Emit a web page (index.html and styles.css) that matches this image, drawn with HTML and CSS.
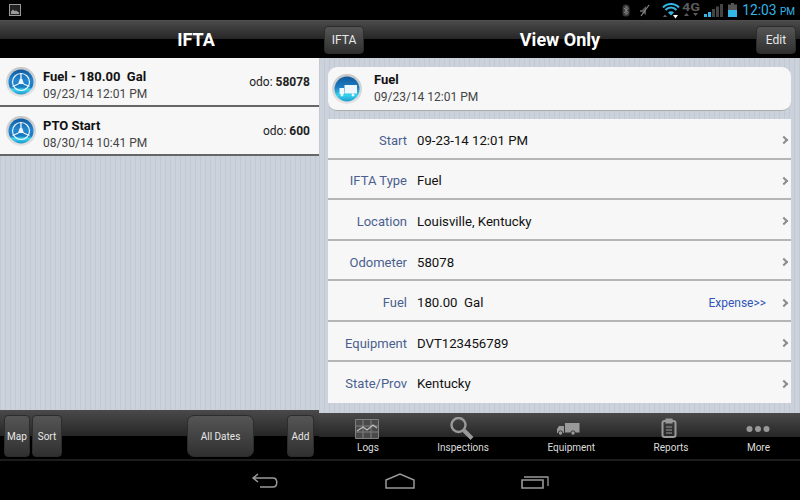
FILE: index.html
```html
<!DOCTYPE html>
<html lang="en">

<head>
    <meta charset="UTF-8">
    <title>IFTA</title>
    <link rel="stylesheet" href="styles.css">
</head>

<body>
    <svg class="defs" width="0" height="0">
        <defs>
            <linearGradient id="rim" x1="0" y1="0" x2="0" y2="1">
                <stop offset="0" stop-color="#c4c6c8" />
                <stop offset="1" stop-color="#e4e4e4" />
            </linearGradient>
            <linearGradient id="ball" x1="0" y1="0" x2="0" y2="1">
                <stop offset="0" stop-color="#0f5a9e" />
                <stop offset="0.45" stop-color="#2388d2" />
                <stop offset="0.7" stop-color="#1878c0" />
                <stop offset="0.8" stop-color="#3fd4ee" />
                <stop offset="1" stop-color="#1f94cc" />
            </linearGradient>
            <linearGradient id="glow" x1="0" y1="0" x2="0" y2="1">
                <stop offset="0" stop-color="#10589a" />
                <stop offset="0.45" stop-color="#1f80c6" />
                <stop offset="0.75" stop-color="#35d3ec" />
                <stop offset="1" stop-color="#2299d0" />
            </linearGradient>
            <symbol id="wheel" viewBox="0 0 32 32">
                <circle cx="16" cy="16" r="15" fill="url(#rim)" />
                <circle cx="16" cy="16" r="12.500" fill="url(#ball)" />
                <circle cx="16" cy="16" r="8.500" fill="none" stroke="#eef7fc" stroke-width="1.200" />
                <path d="M16 8v5M13.500 18l-6 2.500M18.500 18l6 2.500" fill="none" stroke="#eef7fc" stroke-width="1.300" />
                <path d="M14.800 13h2.400l1.800 5h-6z" fill="#eef7fc" />
            </symbol>
        </defs>
    </svg>

    <div class="screen">
        <div class="status">
            <svg class="note-icon" width="12" height="12" viewBox="0 0 12 12">
                <rect x="0.5" y="0.5" width="11" height="11" fill="#222" stroke="#999" />
                <path d="M2 10V7.500l2-2 1.500 1.500 1.500-.5 3 2V10z" fill="#999" />
            </svg>
            <div class="status-right">
                <svg class="st-bt" width="8" height="13" viewBox="0 0 8 13">
                    <rect x="0.5" y="0.5" width="7" height="12" rx="3.500" fill="#3a3a3a" />
                    <path d="M2 4l4 4.500-2 2v-8l2 2L2 9" fill="none" stroke="#888" />
                </svg>
                <svg class="st-mute" width="12" height="13" viewBox="0 0 12 13">
                    <path d="M1 6h2l4-4v9L3 8H1z" fill="#555" />
                    <path d="M2 12L10 1" stroke="#888" stroke-width="1.200" />
                </svg>
                <svg class="st-wifi" width="18" height="17" viewBox="0 0 18 17">
                    <path d="M1 5.500a11 11 0 0 1 16 0M3.500 8a7.500 7.500 0 0 1 11 0" fill="none" stroke="#33b5e5" stroke-width="2" />
                    <path d="M6 10.500a4 4 0 0 1 6 0L9 13.500z" fill="#33b5e5" />
                    <path d="M11 13h5l-2.500 3.500z" fill="#fff" />
                    <path d="M1 15l2-2.500L5 15z" fill="#666" />
                </svg>
                <svg class="st-net" width="18" height="16" viewBox="0 0 18 16">
                    <text x="0" y="9" font-size="11" font-weight="bold" font-family="Roboto" fill="#5c5c5c" textLength="18" lengthAdjust="spacingAndGlyphs">4G</text>
                    <path d="M2 14l2.500-3L7 14zM11 11h5l-2.500 3z" fill="#5c5c5c" />
                </svg>
                <svg class="st-sig" width="19" height="13" viewBox="0 0 19 13">
                    <rect x="0" y="10" width="3" height="3" fill="#33b5e5" />
                    <rect x="4" y="8" width="3" height="5" fill="#33b5e5" />
                    <rect x="8" y="5" width="3" height="8" fill="#444" />
                    <rect x="12" y="2.500" width="3" height="10.500" fill="#444" />
                    <rect x="16" y="0" width="3" height="13" fill="#444" />
                </svg>
                <svg class="st-bat" width="9" height="14" viewBox="0 0 9 14">
                    <rect x="3" y="0" width="3" height="2" fill="#555" />
                    <rect x="0" y="1.500" width="9" height="12.500" fill="#555" />
                    <rect x="0" y="7" width="9" height="7" fill="#33b5e5" />
                </svg>
                <span class="clock">12:03 <small>PM</small></span>
            </div>
        </div>

        <div class="panes">
            <div class="pane-left">
                <div class="topbar topbar-left">
                    <h1>IFTA</h1>
                </div>
                <div class="stripes list">
                    <div class="entry">
                        <svg class="ball" width="32" height="32"><use href="#wheel" /></svg>
                        <div class="entry-text">
                            <b>Fuel - 180.00&nbsp; Gal</b>
                            <span>09/23/14 12:01 PM</span>
                        </div>
                        <div class="odo">odo: <b>58078</b></div>
                    </div>
                    <div class="entry">
                        <svg class="ball" width="32" height="32"><use href="#wheel" /></svg>
                        <div class="entry-text">
                            <b>PTO Start</b>
                            <span>08/30/14 10:41 PM</span>
                        </div>
                        <div class="odo">odo: <b>600</b></div>
                    </div>
                </div>
                <div class="toolbar">
                    <div class="btn btn-map">Map</div>
                    <div class="btn btn-sort">Sort</div>
                    <div class="btn btn-dates">All Dates</div>
                    <div class="btn btn-add">Add</div>
                </div>
            </div>

            <div class="pane-right">
                <div class="topbar topbar-right">
                    <div class="btn btn-top">IFTA</div>
                    <h1>View Only</h1>
                    <div class="btn btn-top">Edit</div>
                </div>
                <div class="stripes detail">
                    <div class="summary">
                        <svg width="32" height="32" viewBox="0 0 32 32">
                            <circle cx="16" cy="16" r="15" fill="url(#rim)" />
                            <circle cx="16" cy="16" r="12.500" fill="url(#glow)" />
                            <path d="M13.500 12h12.500v8.500H13.500zM8.500 15H13v6H8.500z" fill="#eef8fc" />
                            <circle cx="11" cy="22" r="1.400" fill="#eef8fc" />
                            <circle cx="22" cy="22" r="1.400" fill="#eef8fc" />
                        </svg>
                        <div class="entry-text">
                            <b>Fuel</b>
                            <span>09/23/14 12:01 PM</span>
                        </div>
                    </div>
                    <div class="rows">
                        <div class="row"><label>Start</label><span>09-23-14 12:01 PM</span><i></i></div>
                        <div class="row"><label>IFTA Type</label><span>Fuel</span><i></i></div>
                        <div class="row"><label>Location</label><span>Louisville, Kentucky</span><i></i></div>
                        <div class="row"><label>Odometer</label><span>58078</span><i></i></div>
                        <div class="row"><label>Fuel</label><span>180.00&nbsp; Gal</span><a>Expense&gt;&gt;</a><i></i></div>
                        <div class="row"><label>Equipment</label><span>DVT123456789</span><i></i></div>
                        <div class="row"><label>State/Prov</label><span>Kentucky</span><i></i></div>
                    </div>
                </div>
                <div class="tabs">
                    <div class="tab">
                        <svg width="28" height="24" viewBox="0 0 28 24">
                            <path d="M1.500 2.500h23v19h-23zM1.500 9h23M1.500 15h23M9 2.500v19M17 2.500v19" fill="#4a4a4a" stroke="#808080" />
                            <path d="M3 14l6-4 4 3 6-5 4 3" fill="none" stroke="#bbb" stroke-width="1.300" />
                        </svg>
                        Logs
                    </div>
                    <div class="tab">
                        <svg width="28" height="24" viewBox="0 0 28 24">
                            <circle cx="9.500" cy="8" r="7" fill="none" stroke="#999" stroke-width="2.400" />
                            <path d="M15 13.500l8 8" stroke="#999" stroke-width="4" />
                        </svg>
                        Inspections
                    </div>
                    <div class="tab">
                        <svg width="28" height="24" viewBox="0 0 28 24">
                            <path d="M8 6h14.500v9.500H8zM2 9h5v7H0v-4z" fill="#999" />
                            <circle cx="3.500" cy="16" r="2.200" fill="#999" stroke="#222" stroke-width="0.800" />
                            <circle cx="16" cy="16" r="2.200" fill="#999" stroke="#222" stroke-width="0.800" />
                        </svg>
                        Equipment
                    </div>
                    <div class="tab">
                        <svg width="28" height="24" viewBox="0 0 28 24">
                            <rect x="5.500" y="4" width="13" height="16" rx="2" fill="none" stroke="#999" stroke-width="2" />
                            <path d="M9 2h6v4H9zM9 10h6M9 13h6M9 16h6" fill="#999" stroke="#999" stroke-width="1.200" />
                        </svg>
                        Reports
                    </div>
                    <div class="tab">
                        <svg width="28" height="24" viewBox="0 0 28 24">
                            <circle cx="5.500" cy="12" r="3" fill="#999" />
                            <circle cx="14" cy="12" r="3" fill="#999" />
                            <circle cx="22.500" cy="12" r="3" fill="#999" />
                        </svg>
                        More
                    </div>
                </div>
            </div>
        </div>

        <div class="navbar">
            <svg width="28" height="16" viewBox="0 0 28 16">
                <path d="M7 1L2 5l5 4M2 5h20c5 0 5 9 0 9H9" fill="none" stroke="#999" stroke-width="1.500" />
            </svg>
            <svg width="30" height="16" viewBox="0 0 30 16">
                <path d="M1 7L15 1l14 6v8H1z" fill="none" stroke="#999" stroke-width="1.500" />
            </svg>
            <svg width="28" height="16" viewBox="0 0 28 16">
                <path d="M1 7h21v8H1z" fill="none" stroke="#999" stroke-width="1.600" />
                <path d="M3 4h24v9" fill="none" stroke="#999" stroke-width="1.300" />
            </svg>
        </div>
    </div>
</body>

</html>
```

FILE: styles.css
```css
body {
    margin: 0;
    background-color: #000;
    font-family: Roboto, "Liberation Sans", sans-serif;
}

.defs {
    display: block;
    height: 0;
}

.screen {
    width: 800px;
    height: 500px;
    display: flex;
    flex-direction: column;
    overflow: hidden;
}

.status {
    height: 20px;
    padding: 0 5px 0 9px;
    display: flex;
    align-items: center;
    justify-content: space-between;
    background-color: #000;
}

.status-right {
    display: flex;
    align-items: center;
}

.note-icon {
    display: block;
}

.st-mute {
    margin-left: 9px;
}

.st-wifi {
    margin-left: 11px;
}

.st-net {
    margin-left: 2px;
}

.st-sig {
    margin-left: 4px;
}

.st-bat {
    margin-left: 5px;
}

.clock {
    margin-left: 5px;
    color: #33b5e5;
    font-size: 13.800px;
}

.clock small {
    font-size: 10px;
}

.panes {
    flex: 1;
    min-height: 0;
    display: flex;
}

.pane-left {
    width: 319px;
    display: flex;
    flex-direction: column;
}

.pane-right {
    flex: 1;
    display: flex;
    flex-direction: column;
}

.topbar {
    height: 38px;
    flex: none;
    display: flex;
    align-items: center;
    justify-content: center;
    background: linear-gradient(#555 0, #4a4a4a 1px, #262626 19px, #000 19px);
}

.topbar h1 {
    margin: 1px 0 0;
    color: #fff;
    font-size: 18px;
    font-weight: bold;
}

.topbar-left {
    padding-left: 73px;
}

.topbar-right {
    justify-content: space-between;
    padding: 0 4px 0 5px;
}

.btn {
    display: flex;
    align-items: center;
    justify-content: center;
    border-radius: 4px;
    border: 1px solid #2c2c2c;
    box-sizing: border-box;
    color: #e8e8e8;
    font-size: 10px;
    background: linear-gradient(#555, #303030);
}

.btn-top {
    width: 40px;
    height: 28px;
    margin-top: 2px;
    font-size: 12px;
}

.stripes {
    flex: 1;
    min-height: 0;
    background-color: #c8ced8;
    background-image: repeating-linear-gradient(90deg, #c3c9d3 0, #c3c9d3 1px, #ccd2dc 1px, #ccd2dc 5px);
}

.entry {
    height: 47px;
    display: flex;
    align-items: center;
    padding-left: 5px;
    padding-right: 9px;
    gap: 6px;
    background-color: #f7f7f7;
    border-bottom: 2px solid #666;
}

.entry-text {
    flex: 1;
    display: flex;
    flex-direction: column;
    gap: 1px;
}

.entry .entry-text {
    padding-top: 8px;
}

.entry-text b {
    color: #111;
    font-size: 13px;
    line-height: 16px;
}

.entry-text span {
    color: #444;
    font-size: 12px;
    line-height: 16px;
}

.odo {
    color: #222;
    font-size: 12px;
    padding-top: 1px;
}

.toolbar {
    height: 49px;
    flex: none;
    display: flex;
    align-items: center;
    padding: 0 5px 0 4px;
    gap: 2px;
    background: linear-gradient(#4a4a4a 0, #262626 26px, #000 26px);
}

.toolbar .btn {
    height: 42px;
    margin-top: 3px;
}

.btn-map {
    width: 26px;
}

.btn-sort {
    width: 30px;
    margin-right: auto;
}

.btn-dates {
    width: 67px;
    border-radius: 7px;
    margin-right: 31px;
}

.btn-add {
    width: 27px;
}

.detail {
    padding: 9px 9px 10px;
    display: flex;
    flex-direction: column;
}

.summary {
    height: 43px;
    flex: none;
    display: flex;
    align-items: center;
    gap: 11px;
    padding-left: 3px;
    margin-bottom: 8px;
    border-radius: 9px;
    background-color: #f7f7f7;
    border-bottom: 1px solid #aaa;
}

.rows {
    flex: 1;
    display: flex;
    flex-direction: column;
    background-color: #f7f7f7;
}

.row {
    flex: 1;
    display: flex;
    align-items: center;
    padding-top: 4px;
    color: #111;
    font-size: 13.200px;
    border-bottom: 2px solid #b5b5b5;
}

.row:last-child {
    border-bottom-color: transparent;
}

.row label {
    width: 79px;
    margin-right: 10px;
    color: #4a5f8f;
    text-align: right;
    font-size: 13px;
}

.row span {
    flex: 1;
}

.row a {
    margin-right: 15px;
    color: #2f55b5;
    font-size: 12px;
}

.row i {
    width: 4px;
    height: 4px;
    margin-right: 4px;
    border-top: 2px solid #8c8c8c;
    border-right: 2px solid #8c8c8c;
    transform: rotate(45deg);
}

.tabs {
    height: 46px;
    flex: none;
    display: flex;
    justify-content: space-between;
    padding: 0 30px 0 38px;
    background: linear-gradient(#4a4a4a 0, #262626 24px, #000 24px);
}

.tab {
    display: flex;
    flex-direction: column;
    align-items: center;
    color: #ddd;
    font-size: 10px;
    line-height: 12px;
    white-space: nowrap;
    padding-top: 4px;
}

.tab svg {
    flex: none;
    margin: 0 -14px 1px;
}

.navbar {
    height: 41px;
    flex: none;
    display: flex;
    align-items: center;
    justify-content: center;
    gap: 106px;
    box-sizing: border-box;
    border-top: 2px solid #1c1c1c;
}
```
